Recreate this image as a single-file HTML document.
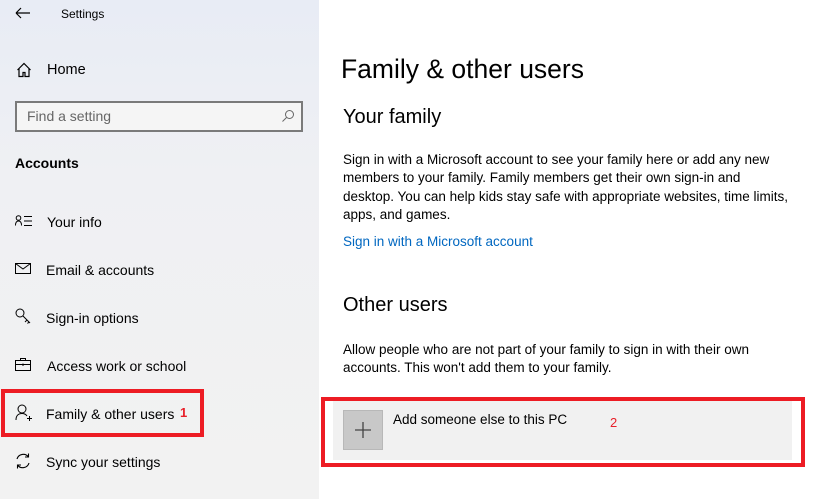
<!DOCTYPE html><html><head><style>
*{margin:0;padding:0;box-sizing:border-box}
body{width:819px;height:499px;position:relative;overflow:hidden;background:#fff;font-family:"Liberation Sans",sans-serif;color:#000}
.side{position:absolute;left:0;top:0;width:319px;height:499px;background:linear-gradient(#e8ecf5 0%,#eff0f3 35%,#f2f2f2 100%)}
.a{position:absolute;white-space:nowrap}
.nav{font-size:14px;left:46px}
.ic{position:absolute}
p.t{position:absolute;left:343px;font-size:13.5px;line-height:18.4px;width:448px}
</style></head><body>
<div class="side"></div>
<svg class="ic" style="left:15px;top:7px" width="16" height="12"><path d="M1 6H15M1 6L6 1M1 6L6 11" stroke="#000" fill="none" stroke-width="1.2"/></svg>
<div class="a" style="left:61px;top:7px;font-size:12px">Settings</div>
<svg class="ic" style="left:16px;top:62px" width="16" height="16"><path d="M1.5 8L8 1.5L14.5 8M3 6.5V14.5H7V10.5H9V14.5H13V6.5" stroke="#000" fill="none" stroke-width="1.2"/></svg>
<div class="a nav" style="left:47px;top:62px;font-size:14.5px">Home</div>
<div class="a" style="left:15px;top:101px;width:288px;height:31px;border:2px solid #7a7a7a;background:#f5f5f5"></div>
<div class="a" style="left:27px;top:108px;font-size:14px;color:#666">Find a setting</div>
<svg class="ic" style="left:281px;top:109px" width="14" height="14"><circle cx="8.5" cy="5.5" r="4" stroke="#666" fill="none"/><path d="M5.5 8.5L1.5 12.5" stroke="#666"/></svg>
<div class="a" style="left:15px;top:155px;font-size:14px;font-weight:bold">Accounts</div>
<svg class="ic" style="left:15px;top:215px" width="18" height="12"><circle cx="3.5" cy="3" r="2.3" stroke="#000" fill="none"/><path d="M.5 10.5C.5 7 2 6 3.5 6S6.5 7 6.5 10.5M9 1.5H17M9 6H17M9 10.5H17" stroke="#000" fill="none"/></svg>
<div class="a nav" style="left:47px;top:214px">Your info</div>
<svg class="ic" style="left:15px;top:263px" width="17" height="12"><rect x=".5" y=".5" width="15" height="10" stroke="#000" fill="none"/><path d="M.5 .5L8 6L15.5 .5" stroke="#000" fill="none"/></svg>
<div class="a nav" style="top:262px">Email &amp; accounts</div>
<svg class="ic" style="left:15px;top:308px" width="17" height="17"><circle cx="5" cy="5" r="4" stroke="#000" fill="none"/><path d="M8 8L15 15M12 12L10 14M14 14L12.5 15.5" stroke="#000" fill="none"/></svg>
<div class="a nav" style="top:310px">Sign-in options</div>
<svg class="ic" style="left:15px;top:358px" width="17" height="13"><rect x=".5" y="2.5" width="15" height="10" stroke="#000" fill="none"/><path d="M5.5 2.5V.5H10.5V2.5M.5 6.5H15.5M8 5.5V8" stroke="#000" fill="none"/></svg>
<div class="a nav" style="left:47px;top:358px">Access work or school</div>
<svg class="ic" style="left:15px;top:404px" width="18" height="18"><circle cx="7" cy="5" r="4" stroke="#000" fill="none"/><path d="M1 16C1 11 4 9.5 7 9.5S11 10.5 12 12M12 14.5H17M14.5 12V17" stroke="#000" fill="none"/></svg>
<div class="a nav" style="top:406px">Family &amp; other users</div>
<div class="a" style="left:180px;top:405px;font-size:13px;font-weight:bold;color:#e8202a">1</div>
<div class="a" style="left:1px;top:389px;width:203px;height:48px;border:4px solid #ed1c24"></div>
<svg class="ic" style="left:14px;top:452px" width="18" height="18"><path d="M3 7A6.5 6.5 0 0 1 14.5 5M15 11A6.5 6.5 0 0 1 3.5 13M14.5 1.5V5H11M3.5 16.5V13H7" stroke="#000" fill="none" stroke-width="1.1"/></svg>
<div class="a nav" style="top:454px">Sync your settings</div>

<div class="a" style="left:341px;top:54px;font-size:26.5px">Family &amp; other users</div>
<div class="a" style="left:343px;top:106px;font-size:20px">Your family</div>
<p class="t" style="top:151px">Sign in with a Microsoft account to see your family here or add any new members to your family. Family members get their own sign-in and desktop. You can help kids stay safe with appropriate websites, time limits, apps, and games.</p>
<div class="a" style="left:343px;top:234px;font-size:13.5px;color:#0067c0">Sign in with a Microsoft account</div>
<div class="a" style="left:343px;top:294px;font-size:20px">Other users</div>
<p class="t" style="top:341px">Allow people who are not part of your family to sign in with their own accounts. This won't add them to your family.</p>
<div class="a" style="left:321px;top:397px;width:484px;height:70px;border:4px solid #ed1c24"></div>
<div class="a" style="left:333px;top:401px;width:459px;height:59px;background:#f1f1f1"></div>
<div class="a" style="left:343px;top:410px;width:40px;height:40px;background:#c8c8c8;border:1px solid #b8b8b8"></div>
<svg class="ic" style="left:354px;top:421px" width="18" height="18"><path d="M9 1V17M1 9H17" stroke="#444" stroke-width="1.3"/></svg>
<div class="a" style="left:393px;top:412px;font-size:13.5px">Add someone else to this PC</div>
<div class="a" style="left:610px;top:415px;font-size:13px;color:#e8202a">2</div>
</body></html>
